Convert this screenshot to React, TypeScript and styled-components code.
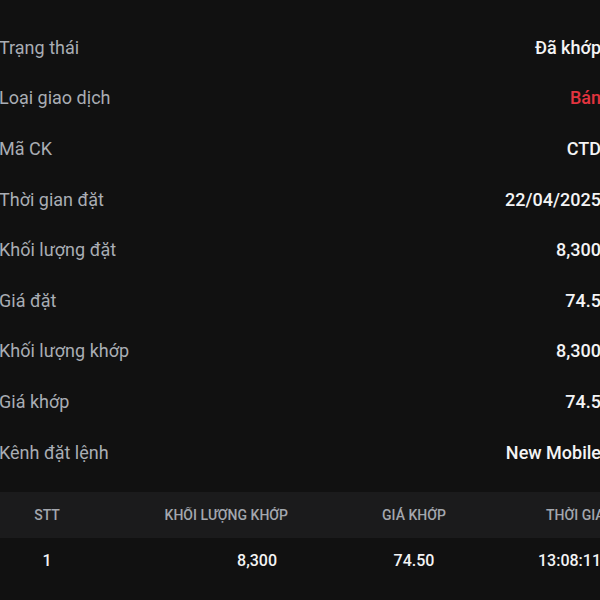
import React from 'react'
import styled, { createGlobalStyle } from 'styled-components'

const GlobalStyle = createGlobalStyle`
  html, body {
    margin: 0;
    padding: 0;
    background: #111111;
    overflow: hidden;
  }
  body {
    font-family: Roboto, 'Noto Sans', sans-serif;
  }
`

interface IDetailRow {
  label: string
  value: string
  danger?: boolean
}

const DETAILS: IDetailRow[] = [
  { label: 'Trạng thái', value: 'Đã khớp' },
  { label: 'Loại giao dịch', value: 'Bán', danger: true },
  { label: 'Mã CK', value: 'CTD' },
  { label: 'Thời gian đặt', value: '22/04/2025' },
  { label: 'Khối lượng đặt', value: '8,300' },
  { label: 'Giá đặt', value: '74.5' },
  { label: 'Khối lượng khớp', value: '8,300' },
  { label: 'Giá khớp', value: '74.5' },
  { label: 'Kênh đặt lệnh', value: 'New Mobile' },
]

const MATCHES = [{ stt: '1', volume: '8,300', price: '74.50', time: '13:08:11' }]

/**
 * Chi tiết lệnh đặt + bảng khớp lệnh
 */
export default function App(): JSX.Element {
  return (
    <>
      <GlobalStyle />
      <PageSCP>
        <DetailListSCP>
          {DETAILS.map(item => (
            <DetailRowSCP key={item.label}>
              <LabelSCP>{item.label}</LabelSCP>
              <ValueSCP $danger={item.danger}>{item.value}</ValueSCP>
            </DetailRowSCP>
          ))}
        </DetailListSCP>

        <TableSCP>
          <HeadRowSCP>
            <CellSCP $align={'center'}>STT</CellSCP>
            <CellSCP $align={'end'} $pad={12}>Khối lượng khớp</CellSCP>
            <CellSCP $align={'center'}>Giá khớp</CellSCP>
            <CellSCP $align={'start'} $pad={18}>Thời gian</CellSCP>
          </HeadRowSCP>
          {MATCHES.map(row => (
            <BodyRowSCP key={row.stt}>
              <CellSCP $align={'center'}>{row.stt}</CellSCP>
              <CellSCP $align={'end'} $pad={23}>{row.volume}</CellSCP>
              <CellSCP $align={'center'}>{row.price}</CellSCP>
              <CellSCP $align={'end'}>{row.time}</CellSCP>
            </BodyRowSCP>
          ))}
        </TableSCP>
      </PageSCP>
    </>
  )
}

const PageSCP = styled.div`
  width: 602px;
  height: 600px;
  margin-left: -1px;
  padding-top: 22px;
  box-sizing: border-box;
  background: #111111;
  overflow: hidden;
`
const DetailListSCP = styled.div`
  display: flex;
  flex-direction: column;
`
const DetailRowSCP = styled.div`
  height: 50.6px;
  display: flex;
  align-items: center;
  justify-content: space-between;
  font-size: 18px;
`
const LabelSCP = styled.span`
  color: #a9adb4;
`
const ValueSCP = styled.span<{ $danger?: boolean }>`
  color: ${props => (props.$danger ? '#e2343f' : '#f4f4f5')};
  font-weight: 500;
`
const TableSCP = styled.div`
  margin-top: 15px;
`
const HeadRowSCP = styled.div`
  display: grid;
  grid-template-columns: 96px 205px 228px 1fr;
  height: 46px;
  align-items: center;
  background: #1b1b1c;
  font-size: 14px;
  font-weight: 500;
  text-transform: uppercase;
  color: #a3a7ae;
  white-space: nowrap;
`
const BodyRowSCP = styled.div`
  display: grid;
  grid-template-columns: 96px 205px 228px 1fr;
  height: 44px;
  align-items: center;
  font-size: 16px;
  font-weight: 500;
  color: #f4f4f5;
`
const CellSCP = styled.div<{ $align: 'start' | 'center' | 'end'; $pad?: number }>`
  display: flex;
  justify-content: ${props => (props.$align === 'start' ? 'flex-start' : props.$align === 'end' ? 'flex-end' : 'center')};
  padding-left: ${props => (props.$align === 'start' ? props.$pad || 0 : 0)}px;
  padding-right: ${props => (props.$align === 'end' ? props.$pad || 0 : 0)}px;
  overflow: hidden;
`
